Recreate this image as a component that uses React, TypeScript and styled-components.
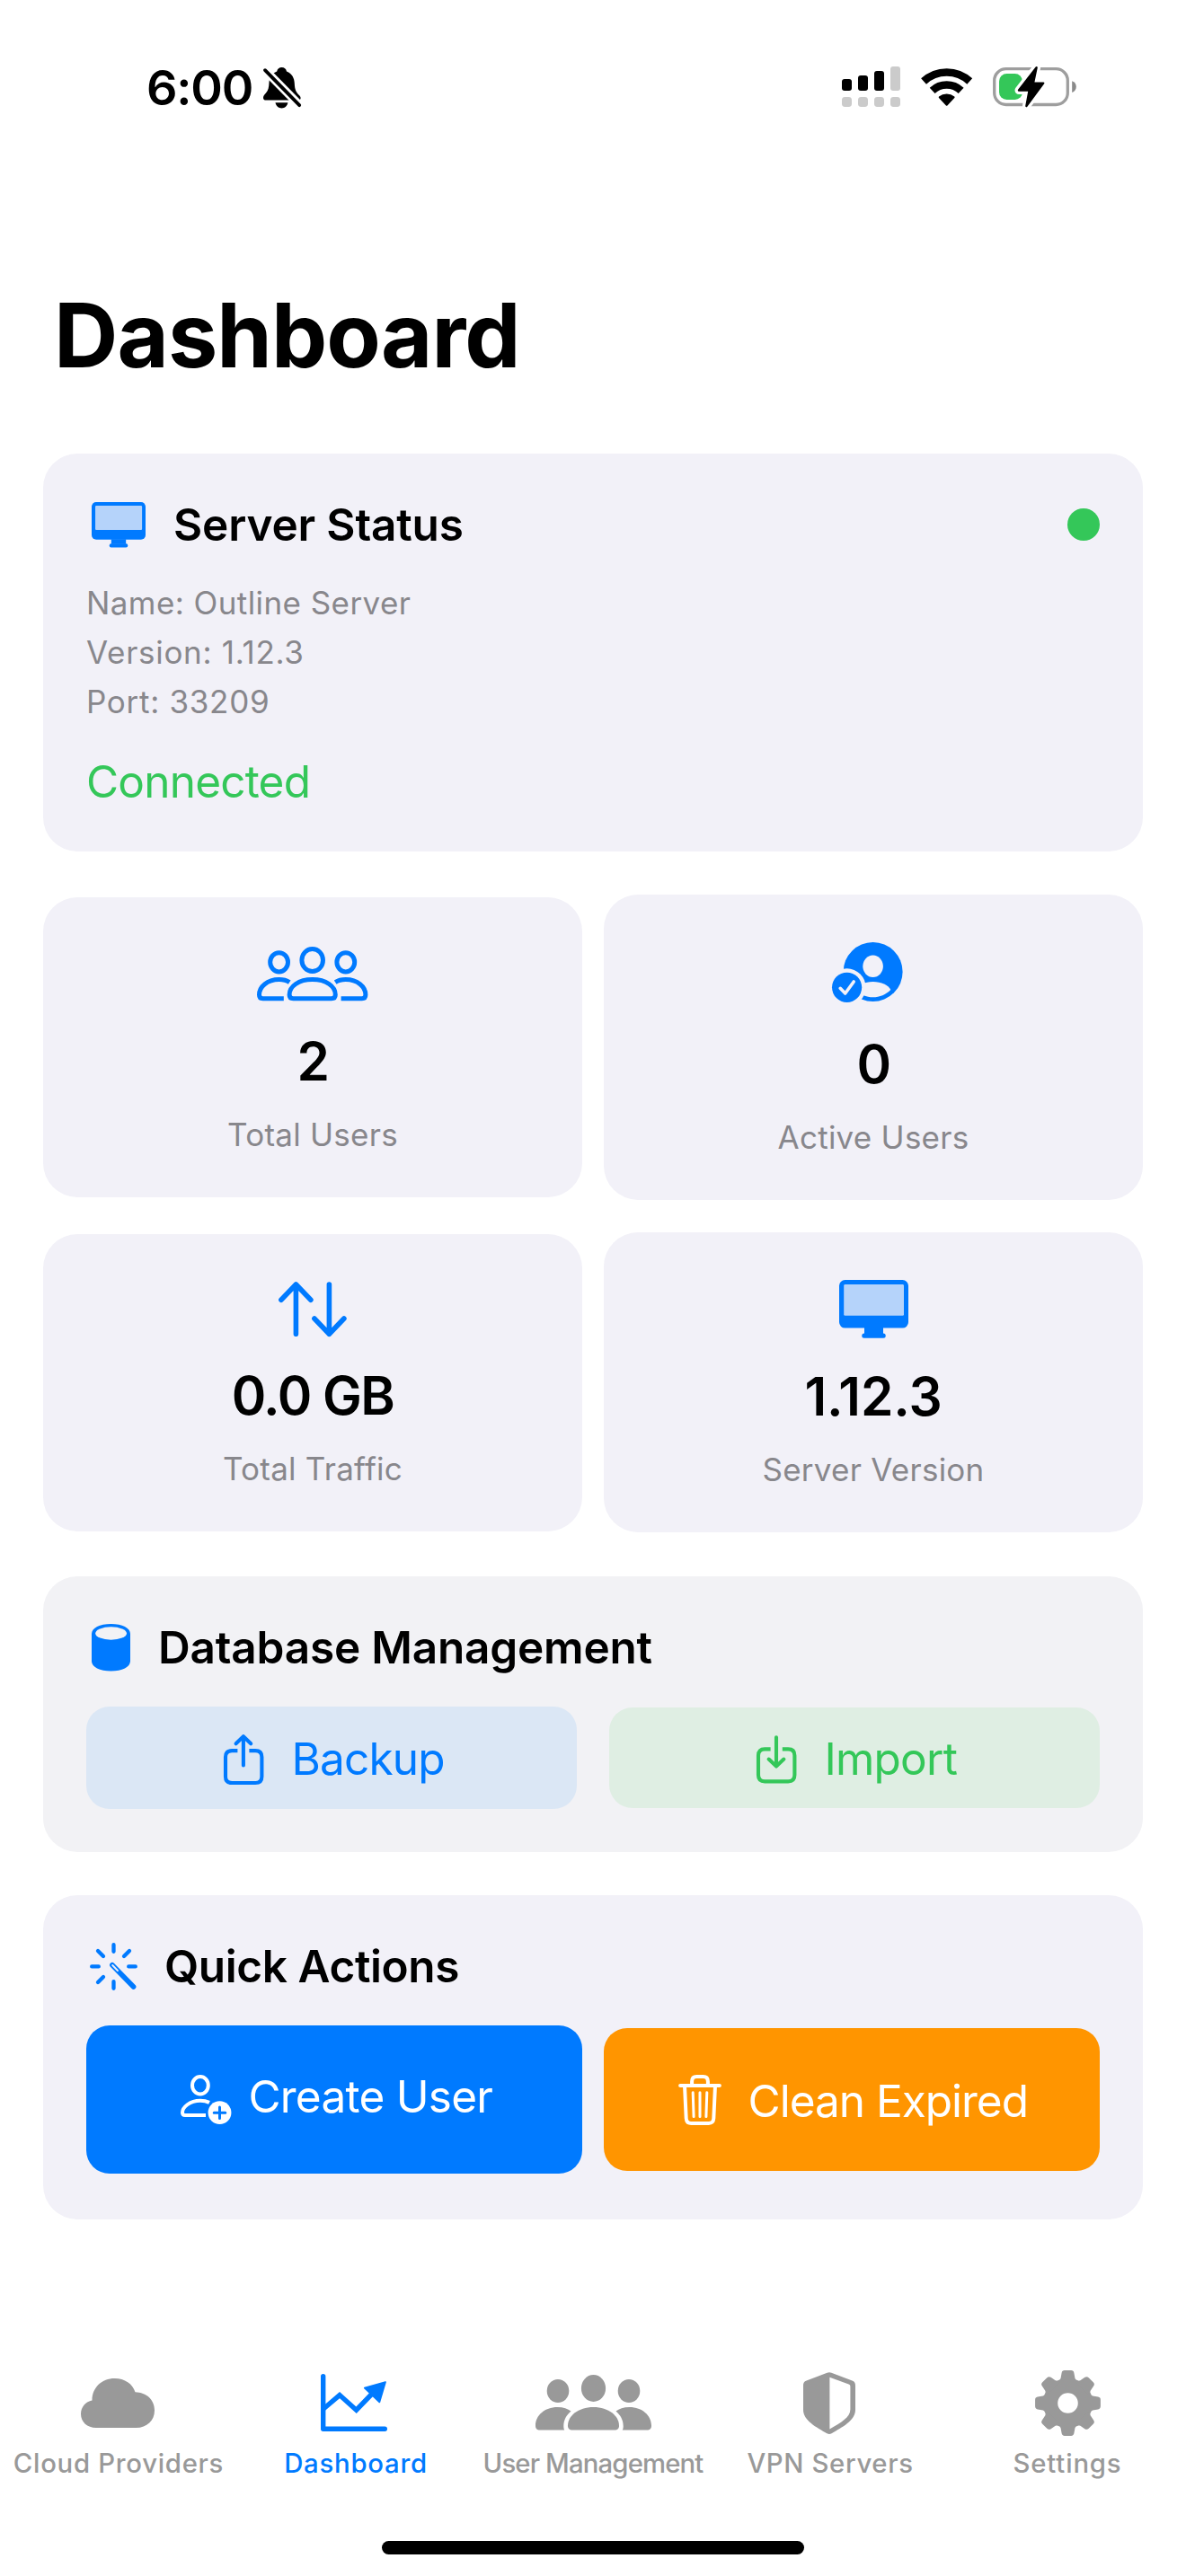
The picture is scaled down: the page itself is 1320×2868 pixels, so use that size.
import React from "react";
import styled, { createGlobalStyle } from "styled-components";

const BLUE = "#007aff";
const GREEN = "#34c759";
const ORANGE = "#ff9500";
const CARD = "#f2f1f8";
const CARD_NEUTRAL = "#f2f2f5";
const SECONDARY = "#88878c";
const TAB_GRAY = "#999999";

const GlobalStyle = createGlobalStyle`
  * { box-sizing: border-box; }
  body {
    margin: 0;
    background: #fff;
    font-family: Inter, "Liberation Sans", sans-serif;
    color: #000;
  }
  svg { display: block; flex: none; overflow: visible; }
`;

const Screen = styled.div`
  width: 1320px;
  height: 2868px;
  display: flex;
  flex-direction: column;
  background: #fff;
  overflow: hidden;
`;

const StatusBar = styled.header`
  height: 196px;
  padding: 0 122px 0 163px;
  display: flex;
  align-items: center;
  justify-content: space-between;
`;

const Clock = styled.div`
  display: flex;
  align-items: center;
  gap: 12px;
`;

const Time = styled.span`
  font-size: 54px;
  line-height: 64px;
  font-weight: 600;
  letter-spacing: -1.2px;
`;

const Indicators = styled.div`
  display: flex;
  align-items: center;
  gap: 23px;
  padding-bottom: 3px;
`;

const Title = styled.h1`
  margin: 117px 0 72px 60px;
  font-size: 98.8px;
  line-height: 120px;
  font-weight: 700;
  letter-spacing: -0.9px;
`;

const Content = styled.main`
  padding: 0 48px;
  display: flex;
  flex-direction: column;
  gap: 48px;
`;

const Card = styled.section<{ $neutral?: boolean; $bottom?: number }>`
  padding: 48px 48px ${(p) => p.$bottom ?? 48}px;
  border-radius: 38px;
  background: ${(p) => (p.$neutral ? CARD_NEUTRAL : CARD)};
`;

const CardHeader = styled.div<{ $gap: number; $inset?: number }>`
  height: 62px;
  padding-left: ${(p) => p.$inset ?? 6}px;
  display: flex;
  align-items: center;
  gap: ${(p) => p.$gap}px;
`;

const CardTitle = styled.h2<{ $track: number }>`
  margin: 0;
  font-size: 49.5px;
  line-height: 62px;
  font-weight: 600;
  letter-spacing: ${(p) => p.$track}px;
  white-space: nowrap;
`;

const StatusDot = styled.span`
  width: 36px;
  height: 36px;
  margin-left: auto;
  border-radius: 50%;
  background: ${GREEN};
`;

const Details = styled.div`
  margin-top: 29px;
  display: flex;
  flex-direction: column;
`;

const Detail = styled.span<{ $track: number }>`
  font-size: 35px;
  line-height: 55px;
  letter-spacing: ${(p) => p.$track}px;
  color: ${SECONDARY};
`;

const Connection = styled.div`
  margin-top: 31px;
  font-size: 49.5px;
  line-height: 60px;
  letter-spacing: -0.8px;
  color: ${GREEN};
`;

const StatGrid = styled.div`
  display: grid;
  grid-template-columns: 1fr 1fr;
  gap: 36px 24px;
  align-items: center;
  margin-bottom: 1px;
`;

const StatCard = styled.div`
  padding: 48px;
  border-radius: 38px;
  background: ${CARD};
  display: flex;
  flex-direction: column;
  align-items: center;
  gap: 24px;
`;

const StatIcon = styled.div<{ $height: number; $shift?: number; $lift?: number }>`
  height: ${(p) => p.$height}px;
  padding-right: ${(p) => p.$shift ?? 0}px;
  padding-bottom: ${(p) => p.$lift ?? 0}px;
  display: flex;
  align-items: center;
`;

const StatValue = styled.div<{ $track?: number }>`
  font-size: 58.5px;
  line-height: 72px;
  font-weight: 600;
  letter-spacing: ${(p) => p.$track ?? -1.5}px;
`;

const StatLabel = styled.div`
  font-size: 35px;
  line-height: 43px;
  letter-spacing: 0.25px;
  color: ${SECONDARY};
`;

const ButtonRow = styled.div<{ $gap: number }>`
  margin-top: 35px;
  display: grid;
  grid-template-columns: 1fr 1fr;
  gap: ${(p) => p.$gap}px;
  align-items: center;
`;

const ActionButton = styled.button<{
  $bg: string;
  $fg: string;
  $height: number;
  $gap: number;
  $left: number;
  $drop?: number;
}>`
  height: ${(p) => p.$height}px;
  padding: ${(p) => p.$drop ?? 0}px 0 0 ${(p) => p.$left}px;
  border: 0;
  border-radius: 26px;
  background: ${(p) => p.$bg};
  color: ${(p) => p.$fg};
  font-family: inherit;
  display: flex;
  align-items: center;
  gap: ${(p) => p.$gap}px;
`;

const ButtonText = styled.span<{ $track: number; $lift?: number }>`
  font-size: 49.5px;
  line-height: 60px;
  font-weight: 400;
  letter-spacing: ${(p) => p.$track}px;
  padding-bottom: ${(p) => Math.max(p.$lift ?? 0, 0)}px;
  padding-top: ${(p) => Math.max(-(p.$lift ?? 0), 0)}px;
  white-space: nowrap;
`;

const TabBar = styled.nav`
  margin-top: auto;
  display: grid;
  grid-template-columns: repeat(5, 264px);
`;

const Tab = styled.div<{ $active?: boolean }>`
  display: flex;
  flex-direction: column;
  align-items: center;
  color: ${(p) => (p.$active ? BLUE : TAB_GRAY)};
`;

const TabIcon = styled.div<{ $shift?: number }>`
  height: 78px;
  padding-right: ${(p) => p.$shift ?? 0}px;
  display: flex;
  align-items: center;
`;

const TabLabel = styled.span<{ $track: number }>`
  margin-top: 11px;
  font-size: 29.3px;
  line-height: 36px;
  font-weight: 500;
  letter-spacing: ${(p) => p.$track}px;
  white-space: nowrap;
`;

const HomeIndicator = styled.div`
  width: 470px;
  height: 15px;
  margin: 68px auto 24px;
  border-radius: 8px;
  background: #000;
`;

const BellSlash = () => (
  <svg width="42" height="46" viewBox="0 0 42 46">
    <path d="M20.6 0C23.5 0 25.5 1.6 26 4.6C32 7 34.6 12 34.8 18C35 25.5 37 28 40 31C41.3 32.3 41.6 33 41.6 34.2C41.6 35.8 40.3 36.6 38.5 36.6H3.2C1.2 36.6 0 35.6 0 34C0 32 1 30.5 3 28.5C5.5 26 6.3 22 6.5 17C6.8 11 9.5 7 15.2 4.6C15.7 1.6 17.7 0 20.6 0Z" />
    <path d="M13.5 39.3H27.4C26.8 43 24 45.4 20.5 45.4S14.1 43 13.5 39.3Z" />
    <path d="M-1 0L43.5 45.3" stroke="#fff" strokeWidth="9.4" />
    <path d="M2 3.2L40.2 42.2" stroke="#000" strokeWidth="3.8" strokeLinecap="round" />
  </svg>
);

const Signal = () => (
  <svg width="65" height="45" viewBox="0 0 65 45">
    <rect x="0" y="14" width="11" height="13" rx="3" />
    <rect x="18" y="10" width="11" height="17" rx="3" />
    <rect x="36" y="5" width="11" height="22" rx="3" />
    <g fill="#cbcbcb">
      <rect x="54" y="0" width="11" height="27" rx="3" />
      {[0, 18, 36, 54].map((x) => (
        <rect key={x} x={x} y="34" width="11" height="11" rx="3.4" />
      ))}
    </g>
  </svg>
);

const Wifi = () => (
  <svg width="57.3" height="42" viewBox="0 0 57.3 42">
    <g fill="none" stroke="#000" strokeWidth="8.6">
      <path d="M3.05 14.5A37.6 37.6 0 0 1 54.25 14.5" />
      <path d="M12.65 24.8A23.5 23.5 0 0 1 44.65 24.8" />
    </g>
    <path d="M20 31.6A13.7 13.7 0 0 1 37.3 31.6Q38 32.3 37.3 33L29.4 41.4Q28.65 42.2 27.9 41.4L20 33Q19.3 32.3 20 31.6Z" />
  </svg>
);

const Battery = () => (
  <svg width="93" height="47" viewBox="0 -2 93 47">
    <rect x="1.7" y="1.7" width="81.6" height="39.8" rx="13" fill="none" stroke="#9e9e9e" strokeWidth="3.3" />
    <path d="M88.2 15.2C91 16 92.8 18.5 92.8 21.6S91 27.3 88.2 28.1Z" fill="#8a8a8a" />
    <rect x="7" y="7" width="26" height="29" rx="8.5" fill={GREEN} />
    <path
      d="M48.6 0.2L45 17.6H56.2L37.4 43L40.6 25.6H29Z"
      fill="#fff"
      stroke="#fff"
      strokeWidth="9"
      strokeLinejoin="round"
    />
    <path
      d="M48.6 0.2L45 17.6H56.2L37.4 43L40.6 25.6H29Z"
      stroke="#000"
      strokeWidth="2.4"
      strokeLinejoin="round"
    />
  </svg>
);

const Desktop = ({ width }: { width: number }) => (
  <svg width={width} height={(width * 65) / 77} viewBox="0 0 77 65" fill={BLUE}>
    <rect width="77" height="53.6" rx="6.5" />
    <rect x="5.2" y="5" width="66.8" height="34.8" rx="1.4" fill="#b5d3fa" />
    <path d="M28 53H49V60H28Z" />
    <rect x="25.3" y="59.4" width="26.4" height="5.4" rx="2.5" />
  </svg>
);

const UsersOutline = () => (
  <svg width="123.4" height="60.3" viewBox="0 0 123.4 60.3" fill="none" stroke={BLUE} strokeWidth="5">
    <ellipse cx="61.7" cy="15" rx="11.8" ry="12.6" />
    <ellipse cx="24.6" cy="17.3" rx="9.9" ry="10.6" />
    <ellipse cx="98.8" cy="17.3" rx="9.9" ry="10.6" />
    <path d="M36.1 53.5C36.1 44 46.5 36.6 61.7 36.6S87.3 44 87.3 53.5C87.3 56.5 86 57.8 83 57.8H40.4C37.4 57.8 36.1 56.5 36.1 53.5Z" />
    <path d="M36.2 39.6C33 37.5 28.8 36.6 24.6 36.6C11.5 36.6 2.5 44.5 2.5 53.5C2.5 56.3 3.6 57.8 6.5 57.8H29.8" />
    <path d="M87.2 39.6C90.4 37.5 94.6 36.6 98.8 36.6C111.9 36.6 120.9 44.5 120.9 53.5C120.9 56.3 119.8 57.8 116.9 57.8H93.6" />
  </svg>
);

const UserChecked = () => (
  <svg width="79" height="67" viewBox="0 0 79 67" fill={BLUE}>
    <circle cx="45.6" cy="33" r="33" />
    <ellipse cx="45.6" cy="26.8" rx="11.3" ry="12.2" fill={CARD} />
    <path
      d="M45.6 44C55 44 62.5 47.5 65.3 53C60 58.5 53 61.3 45.6 61.3S31.2 58.5 25.9 53C28.7 47.5 36.2 44 45.6 44Z"
      fill={CARD}
    />
    <circle cx="16.6" cy="50.3" r="21" fill={CARD} />
    <circle cx="16.6" cy="50.3" r="16.6" />
    <path
      d="M9.2 51.3L14.7 57L24.2 44"
      fill="none"
      stroke={CARD}
      strokeWidth="3.6"
      strokeLinecap="round"
      strokeLinejoin="round"
    />
  </svg>
);

const UpDown = () => (
  <svg
    width="76"
    height="61"
    viewBox="0 0 76 61"
    fill="none"
    stroke={BLUE}
    strokeWidth="5.6"
    strokeLinecap="round"
    strokeLinejoin="round"
  >
    <path d="M19.4 58.2V3M2.9 20.2L19.4 3L35.9 20.2" />
    <path d="M56.4 3V58.2M39.9 41L56.4 58.2L72.9 41" />
  </svg>
);

const Cylinder = () => (
  <svg width="43" height="52.6" viewBox="0 0 43 52.6" fill={BLUE}>
    <path d="M0 11C0 4.5 9 0 21.5 0S43 4.5 43 11V41.6C43 48.1 34 52.6 21.5 52.6S0 48.1 0 41.6Z" />
    <ellipse cx="21.6" cy="10.5" rx="17.4" ry="7.2" fill={CARD_NEUTRAL} />
  </svg>
);

const Share = () => (
  <svg
    width="44.4"
    height="56"
    viewBox="0 0 44.4 56"
    fill="none"
    stroke="currentColor"
    strokeWidth="4.1"
    strokeLinejoin="round"
  >
    <path d="M15.4 18.1H9.2C4.2 18.1 2 20.3 2 25.2V46.9C2 51.8 4.2 54 9.2 54H35.2C40.2 54 42.4 51.8 42.4 46.9V25.2C42.4 20.3 40.2 18.1 35.2 18.1H28.4" />
    <path d="M21.9 34.5V2.2M13.6 10.3L21.9 2.2L30.2 10.3" strokeLinecap="round" />
  </svg>
);

const ImportIcon = () => (
  <svg
    width="44.4"
    height="53.4"
    viewBox="0 0 44.4 53.4"
    fill="none"
    stroke="currentColor"
    strokeWidth="4.1"
    strokeLinejoin="round"
  >
    <path d="M15.6 15.4H9.2C4.2 15.4 2 17.6 2 22.5V44.3C2 49.2 4.2 51.4 9.2 51.4H35.2C40.2 51.4 42.4 49.2 42.4 44.3V22.5C42.4 17.6 40.2 15.4 35.2 15.4H28.8" />
    <path d="M22 2.2V34.4M13.6 26.6L22 34.6L30.4 26.6" strokeLinecap="round" />
  </svg>
);

const Wand = () => (
  <svg width="53" height="53" viewBox="0 0 53 53" fill="none" stroke={BLUE} strokeLinecap="round">
    <g strokeWidth="4.3">
      <path d="M26.5 2.2V9.8M26.5 43.2V50.8M2.2 26.4H9.8M43.2 26.4H50.8" />
      <path d="M9 9L15 15M44 9L38 15M9 44L15 38" />
    </g>
    <path d="M24.9 24.7L48.6 49" strokeWidth="5.6" />
    <path d="M25.2 25L31 31" stroke={CARD} strokeWidth="1.8" />
  </svg>
);

const UserAdd = () => (
  <svg width="56.4" height="55.2" viewBox="0 0 56.4 55.2" fill="none" stroke="#fff" strokeWidth="4">
    <ellipse cx="21.9" cy="11.7" rx="8.9" ry="9.7" />
    <path d="M32 30.9C29 29.4 25.5 28.7 21.9 28.7C10 28.7 2 36.5 2 42C2 44 3 45.1 5 45.1H28" />
    <circle cx="43.5" cy="42.2" r="12.9" fill="#fff" stroke="none" />
    <path d="M43.5 35.9V48.5M37.2 42.2H49.8" stroke={BLUE} strokeWidth="3" strokeLinecap="round" />
  </svg>
);

const Trash = () => (
  <svg
    width="48"
    height="56"
    viewBox="0 0 48 56"
    fill="none"
    stroke="#fff"
    strokeWidth="4"
    strokeLinecap="round"
    strokeLinejoin="round"
  >
    <path d="M2.1 12H45.9M15.1 12V7.5C15.1 4 17 2.1 20.3 2.1H27.7C31 2.1 32.9 4 32.9 7.5V12" />
    <path d="M7 12L8.7 48.5C8.9 52 10.8 53.9 14.2 53.9H33.8C37.2 53.9 39.1 52 39.3 48.5L41 12" />
    <path d="M16.2 19.8L17.1 46.6M24 19.8V46.6M31.8 19.8L30.9 46.6" strokeWidth="3" />
  </svg>
);

const Cloud = () => (
  <svg width="82" height="55" viewBox="0 0 82 55" fill="currentColor">
    <path d="M17 55C7 55 0 48.5 0 39.5C0 31.5 5.5 26 12.5 24.5C12.5 10 23.5 0 37.5 0C49 0 57.5 6 60.5 15.3C73 15.5 82 24 82 35.5C82 47 73.5 55 61.5 55Z" />
  </svg>
);

const TrendChart = () => (
  <svg
    width="74"
    height="64"
    viewBox="0 0 74 64"
    fill="none"
    stroke="currentColor"
    strokeWidth="5.4"
    strokeLinecap="round"
    strokeLinejoin="round"
  >
    <path d="M2.7 2.7V61.2H71.3" />
    <path d="M3.5 38.5L21 23.6L39.6 40.2L62 17" strokeLinejoin="miter" />
    <path d="M72 9L48.8 15.6L65.3 31.4Z" fill="currentColor" strokeWidth="1.8" />
  </svg>
);

const UsersFilled = () => (
  <svg width="129" height="61.5" viewBox="0 0 129 61.5" fill="currentColor">
    <ellipse cx="64.5" cy="15" rx="13.6" ry="15" />
    <ellipse cx="25" cy="18" rx="12.3" ry="13" />
    <ellipse cx="104" cy="18" rx="12.3" ry="13" />
    <path d="M5 61.5C1.5 61.5 0 60 0 56.5C0 45.5 10 36 24.5 36C31 36 36 38 39.5 40.5C34.5 45 31.3 50 31.3 57C31.3 59 31.6 60.5 32.3 61.5Z" />
    <path d="M124 61.5C127.5 61.5 129 60 129 56.5C129 45.5 119 36 104.5 36C98 36 93 38 89.5 40.5C94.5 45 97.7 50 97.7 57C97.7 59 97.4 60.5 96.7 61.5Z" />
    <path d="M41.3 61.5C37.5 61.5 36 60 36 56.5C36 46 47.3 36 64.5 36S93 46 93 56.5C93 60 91.5 61.5 87.7 61.5Z" />
  </svg>
);

const Shield = () => (
  <svg width="58" height="69" viewBox="0 0 58 69" fill="currentColor">
    <path d="M26.6 0.8C28.3 0.1 29.7 0.1 31.4 0.8L54.4 9.6C57 10.6 58 12 58 15V42C58 54 43 61.5 31.6 68.2C29.8 69.2 28.2 69.2 26.4 68.2C15 61.5 0 54 0 42V15C0 12 1 10.6 3.6 9.6Z" />
    <path d="M29.4 5.8L50.6 13.6C52 14.1 52.4 14.8 52.4 16.5V41.5C52.4 50.5 42 56 29.4 63.6Z" fill="#fff" />
  </svg>
);

const Gear = () => (
  <svg width="73" height="73" viewBox="-36.5 -36.5 73 73" fill="currentColor">
    <circle r="19.4" fill="none" stroke="currentColor" strokeWidth="16.2" />
    {[0, 45, 90, 135, 180, 225, 270, 315].map((angle) => (
      <path
        key={angle}
        transform={`rotate(${angle})`}
        d="M-6.9 -33.6Q-6.4 -36.4 -3.6 -36.4H3.6Q6.4 -36.4 6.9 -33.6L8 -27.6L11 -23H-11L-8 -27.6Z"
      />
    ))}
  </svg>
);

export default function App() {
  return (
    <>
      <GlobalStyle />
      <Screen>
        <StatusBar>
          <Clock>
            <Time>6:00</Time>
            <BellSlash />
          </Clock>
          <Indicators>
            <Signal />
            <Wifi />
            <Battery />
          </Indicators>
        </StatusBar>

        <Title>Dashboard</Title>

        <Content>
          <Card>
            <CardHeader $gap={31}>
              <Desktop width={60} />
              <CardTitle $track={-0.15}>Server Status</CardTitle>
              <StatusDot />
            </CardHeader>
            <Details>
              <Detail $track={0.42}>Name: Outline Server</Detail>
              <Detail $track={0.7}>Version: 1.12.3</Detail>
              <Detail $track={0.7}>Port: 33209</Detail>
            </Details>
            <Connection>Connected</Connection>
          </Card>

          <StatGrid>
            <StatCard>
              <StatIcon $height={75}>
                <UsersOutline />
              </StatIcon>
              <StatValue>2</StatValue>
              <StatLabel>Total Users</StatLabel>
            </StatCard>
            <StatCard>
              <StatIcon $height={81} $shift={13} $lift={4}>
                <UserChecked />
              </StatIcon>
              <StatValue>0</StatValue>
              <StatLabel>Active Users</StatLabel>
            </StatCard>
            <StatCard>
              <StatIcon $height={72}>
                <UpDown />
              </StatIcon>
              <StatValue>0.0 GB</StatValue>
              <StatLabel>Total Traffic</StatLabel>
            </StatCard>
            <StatCard>
              <StatIcon $height={75}>
                <Desktop width={77} />
              </StatIcon>
              <StatValue $track={-0.1}>1.12.3</StatValue>
              <StatLabel>Server Version</StatLabel>
            </StatCard>
          </StatGrid>

          <Card $neutral>
            <CardHeader $gap={31}>
              <Cylinder />
              <CardTitle $track={-0.2}>Database Management</CardTitle>
            </CardHeader>
            <ButtonRow $gap={36}>
              <ActionButton $bg="#dbe7f5" $fg={BLUE} $height={114} $gap={31} $left={153} $drop={4}>
                <Share />
                <ButtonText $track={-0.8} $lift={2}>Backup</ButtonText>
              </ActionButton>
              <ActionButton $bg="#dfeee3" $fg={GREEN} $height={112} $gap={31} $left={164} $drop={4}>
                <ImportIcon />
                <ButtonText $track={-0.75} $lift={2}>Import</ButtonText>
              </ActionButton>
            </ButtonRow>
          </Card>

          <Card $bottom={51}>
            <CardHeader $gap={30} $inset={4}>
              <Wand />
              <CardTitle $track={-0.4}>Quick Actions</CardTitle>
            </CardHeader>
            <ButtonRow $gap={24}>
              <ActionButton $bg={BLUE} $fg="#fff" $height={165} $gap={19} $left={105}>
                <UserAdd />
                <ButtonText $track={-0.75} $lift={7}>Create User</ButtonText>
              </ActionButton>
              <ActionButton $bg={ORANGE} $fg="#fff" $height={159} $gap={29.5} $left={83}>
                <Trash />
                <ButtonText $track={-1} $lift={-3}>Clean Expired</ButtonText>
              </ActionButton>
            </ButtonRow>
          </Card>
        </Content>

        <TabBar>
          <Tab>
            <TabIcon $shift={2}>
              <Cloud />
            </TabIcon>
            <TabLabel $track={0.72}>Cloud Providers</TabLabel>
          </Tab>
          <Tab $active>
            <TabIcon $shift={4}>
              <TrendChart />
            </TabIcon>
            <TabLabel $track={0.75}>Dashboard</TabLabel>
          </Tab>
          <Tab>
            <TabIcon>
              <UsersFilled />
            </TabIcon>
            <TabLabel $track={-0.85}>User Management</TabLabel>
          </Tab>
          <Tab>
            <TabIcon $shift={2}>
              <Shield />
            </TabIcon>
            <TabLabel $track={0.65}>VPN Servers</TabLabel>
          </Tab>
          <Tab>
            <TabIcon>
              <Gear />
            </TabIcon>
            <TabLabel $track={0.85}>Settings</TabLabel>
          </Tab>
        </TabBar>
        <HomeIndicator />
      </Screen>
    </>
  );
}
